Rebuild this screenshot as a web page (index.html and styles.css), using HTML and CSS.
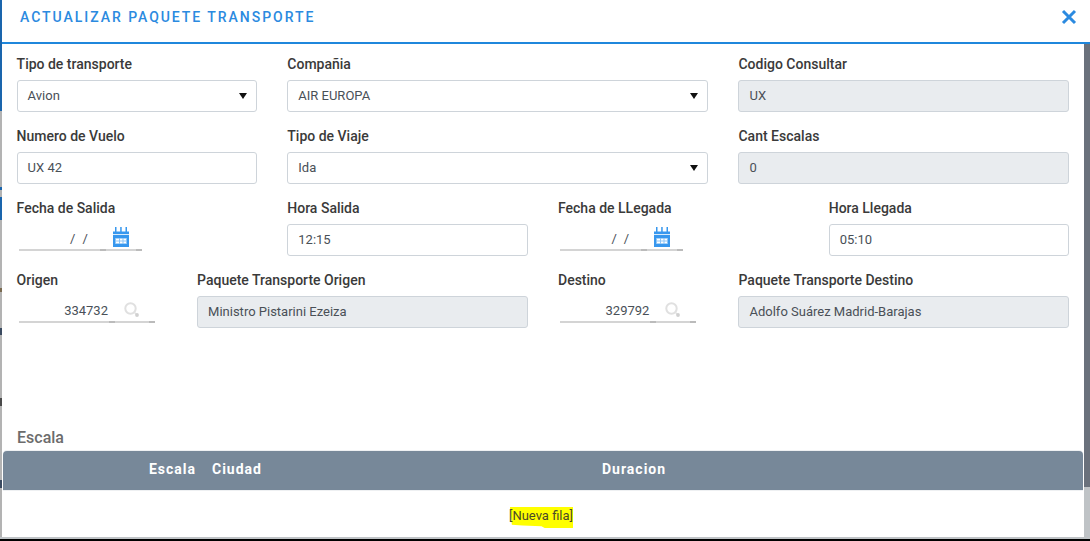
FILE: index.html
```html
<!DOCTYPE html>
<html lang="es">
<head>
<meta charset="utf-8">
<title>Actualizar paquete transporte</title>
<link rel="stylesheet" href="styles.css">
</head>
<body>
<div class="modal">
  <header class="modal-head">
    <h1 class="modal-title">ACTUALIZAR PAQUETE TRANSPORTE</h1>
    <svg class="close" width="16" height="16" viewBox="0 0 16 16"><path d="M2 2 14 14M14 2 2 14" stroke="#2b8ae0" stroke-width="3" fill="none"/></svg>
  </header>
  <div class="modal-body">
    <form class="form-grid">
      <div class="field span3"><label>Tipo de transporte</label><div class="control select">Avion<span class="caret"></span></div></div>
      <div class="field span5"><label>Compañia</label><div class="control select">AIR EUROPA<span class="caret"></span></div></div>
      <div class="field span4"><label>Codigo Consultar</label><div class="control disabled">UX</div></div>

      <div class="field span3"><label>Numero de Vuelo</label><div class="control">UX 42</div></div>
      <div class="field span5"><label>Tipo de Viaje</label><div class="control select">Ida<span class="caret"></span></div></div>
      <div class="field span4"><label>Cant Escalas</label><div class="control disabled">0</div></div>

      <div class="field span3"><label>Fecha de Salida</label>
        <div class="line date"><span class="slashes">/&nbsp;&nbsp;/</span>
          <svg class="cal" width="16" height="20" viewBox="0 0 16 20"><path d="M0 4.500h16V20H0z" fill="#3797ee"/><path d="M2 0h1.500v5H2zM7.200 0h1.500v5H7.200zM12.500 0h1.500v5h-1.500z" fill="#3797ee"/><path d="M0 7h16v1H0z" fill="#d8ebfb"/><path d="M2 11h12v6H2z" fill="#8cc4f6"/><path d="M3 11.800h3v1.700H3zM7 11.800h2.500v1.700H7zM10.500 11.800h2.500v1.700h-2.500zM3 14.500h3v1.700H3zM7 14.500h2.500v1.700H7zM10.500 14.500h2.500v1.700h-2.500z" fill="#fff"/></svg>
        </div></div>
      <div class="field span3"><label>Hora Salida</label><div class="control">12:15</div></div>
      <div class="field span3"><label>Fecha de LLegada</label>
        <div class="line date"><span class="slashes">/&nbsp;&nbsp;/</span>
          <svg class="cal" width="16" height="20" viewBox="0 0 16 20"><path d="M0 4.500h16V20H0z" fill="#3797ee"/><path d="M2 0h1.500v5H2zM7.200 0h1.500v5H7.200zM12.500 0h1.500v5h-1.500z" fill="#3797ee"/><path d="M0 7h16v1H0z" fill="#d8ebfb"/><path d="M2 11h12v6H2z" fill="#8cc4f6"/><path d="M3 11.800h3v1.700H3zM7 11.800h2.500v1.700H7zM10.500 11.800h2.500v1.700h-2.500zM3 14.500h3v1.700H3zM7 14.500h2.500v1.700H7zM10.500 14.500h2.500v1.700h-2.500z" fill="#fff"/></svg>
        </div></div>
      <div class="field span3"><label>Hora Llegada</label><div class="control">05:10</div></div>

      <div class="field span2"><label>Origen</label>
        <div class="line lookup"><span class="code">334732</span>
          <svg class="loupe" width="16" height="16" viewBox="0 0 16 16"><circle cx="6.500" cy="6.500" r="5.200" fill="none" stroke="#e0e0e0" stroke-width="2"/><path d="M10.500 10.500 13 13" stroke="#e4e4e4" stroke-width="1.500"/><circle cx="13" cy="13" r="1.900" fill="#d0d0d0"/></svg>
        </div></div>
      <div class="field span4"><label>Paquete Transporte Origen</label><div class="control disabled">Ministro Pistarini Ezeiza</div></div>
      <div class="field span2"><label>Destino</label>
        <div class="line lookup"><span class="code">329792</span>
          <svg class="loupe" width="16" height="16" viewBox="0 0 16 16"><circle cx="6.500" cy="6.500" r="5.200" fill="none" stroke="#e0e0e0" stroke-width="2"/><path d="M10.500 10.500 13 13" stroke="#e4e4e4" stroke-width="1.500"/><circle cx="13" cy="13" r="1.900" fill="#d0d0d0"/></svg>
        </div></div>
      <div class="field span4"><label>Paquete Transporte Destino</label><div class="control disabled">Adolfo Suárez Madrid-Barajas</div></div>
    </form>
    <h2 class="section-title">Escala</h2>
    <table class="grid">
      <thead>
        <tr><th class="col-escala">Escala</th><th class="col-ciudad">Ciudad</th><th class="col-duracion">Duracion</th></tr>
      </thead>
      <tbody>
        <tr><td colspan="3" class="new-row"><span class="new-link">[Nueva fila]</span></td></tr>
      </tbody>
    </table>
  </div>
</div>
</body>
</html>
```
FILE: styles.css
```css
* { box-sizing: border-box; }
html, body { height: 100%; }
body {
  margin: 0;
  overflow: hidden;
  font-family: Roboto, "Liberation Sans", sans-serif;
  color: #333;
  background:
    linear-gradient(#000, #000) left bottom / 100% 2px no-repeat,
    linear-gradient(#bfc3c6, #bfc3c6) left bottom / 100% 4px no-repeat,
    linear-gradient(#6a717c 0, #6a717c 487px, #bfc3c6 487px) right top / 6px 100% no-repeat,
    linear-gradient(#1a65ad 0, #1a65ad 111px, #b3b3b3 111px, #b3b3b3 187px, #1a65ad 187px, #1a65ad 190px, #b3b3b3 190px, #b3b3b3 197px, #1a65ad 197px, #1a65ad 220px, #b3b3b3 220px, #b3b3b3 288px, #7a6a50 288px, #7a6a50 292px, #b3b3b3 292px, #b3b3b3 328px, #3a4a60 328px, #3a4a60 335px, #b3b3b3 335px, #b3b3b3 398px, #4a4a4a 398px, #4a4a4a 406px, #b3b3b3 406px, #b3b3b3 480px, #3a4a60 480px, #3a4a60 488px, #b3b3b3 488px) left top / 2px 100% no-repeat,
    #fff;
}
.modal {
  width: 1082px;
  height: 537px;
  margin-left: 2px;
  background: #fff;
  border-bottom-left-radius: 4px;
}
.modal-head {
  width: 1088px;
  height: 44px;
  background: #fff;
  border-bottom: 2px solid #1f87dc;
  border-top-left-radius: 4px;
  display: flex;
  align-items: center;
  justify-content: space-between;
  padding: 0 13px 8px 18px;
}
.modal-title {
  margin: 0;
  font-size: 14px;
  font-weight: 500;
  letter-spacing: 1.960px;
  color: #2b8ae0;
}
.close { display: block; }
.form-grid {
  display: grid;
  grid-template-columns: repeat(12, 1fr);
  column-gap: 30px;
  row-gap: 12px;
  padding: 8px 14.600px 0;
}
.span2 { grid-column: span 2; }
.span3 { grid-column: span 3; }
.span4 { grid-column: span 4; }
.span5 { grid-column: span 5; }
.field { min-width: 0; }
.field label {
  display: block;
  height: 28px;
  line-height: 24px;
  font-size: 14px;
  font-weight: 500;
  color: #3a3a3a;
}
.control {
  position: relative;
  height: 32px;
  padding: 0 10px;
  border: 1px solid #ced4da;
  border-radius: 3px;
  background: #fff;
  font-size: 13px;
  line-height: 30px;
  color: #495057;
}
.control.disabled { background: #e9ecef; }
.caret {
  position: absolute;
  top: 12px;
  right: 9px;
  width: 0;
  height: 0;
  border-style: solid;
  border-width: 6px 4px 0;
  border-color: #111 transparent transparent;
}
.line {
  height: 32px;
  margin-left: 2.400px;
  position: relative;
  font-size: 13px;
  color: #495057;
  background-repeat: no-repeat;
  background-size: 100% 2px;
}
.date {
  width: 123px;
  background-image: linear-gradient(90deg, #d4d4d4 81px, #bbb 81px, #bbb 87px, #d4d4d4 87px, #d4d4d4 117px, #bbb 117px);
  background-position: left 25px;
}
.slashes { position: absolute; left: 51px; top: 7px; line-height: 16px; letter-spacing: 0.200px; }
.cal { position: absolute; left: 94px; top: 3px; }
.lookup {
  width: 136px;
  background-image: linear-gradient(90deg, #d4d4d4 90px, #bbb 90px, #bbb 96px, #d4d4d4 96px, #d4d4d4 130px, #bbb 130px);
  background-position: left 25px;
}
.code { position: absolute; right: 47px; top: 7px; line-height: 16px; }
.loupe { position: absolute; left: 105px; top: 6px; }
.section-title {
  margin: 100px 0 0 15px;
  height: 23px;
  line-height: 20px;
  font-size: 16px;
  font-weight: 500;
  color: #6c6c6c;
}
.grid {
  width: 1080px;
  margin-left: 1px;
  border-collapse: collapse;
  table-layout: fixed;
}
.grid th {
  height: 39px;
  background: #778899;
  color: #fff;
  font-size: 14px;
  font-weight: 700;
  letter-spacing: 1px;
  padding: 0 0 4px;
  box-shadow: 0 1px 0 #eef0f2, 0 -1px 0 #eef0f2;
}
.grid thead tr th:first-child { border-top-left-radius: 4px; }
.grid thead tr th:last-child { border-top-right-radius: 4px; }
.col-escala { width: 193px; text-align: right; }
.grid .col-ciudad { width: 390px; text-align: left; padding-left: 16px; }
.grid .col-duracion { text-align: left; padding-left: 16px; }
.new-row { height: 47px; text-align: center; padding: 0 4px 0 0; }
.new-link {
  position: relative;
  isolation: isolate;
  font-size: 13px;
  color: #4a4a2a;
  top: 1px;
}
.new-link::before {
  content: "";
  position: absolute;
  z-index: -1;
  left: 1px;
  right: 0;
  top: -1px;
  height: 21px;
  background: #ffff00;
  clip-path: polygon(0 0, 100% 0, 100% 100%, 55% 100%, 50% 92%, 20% 88%, 3% 84%);
}
```
